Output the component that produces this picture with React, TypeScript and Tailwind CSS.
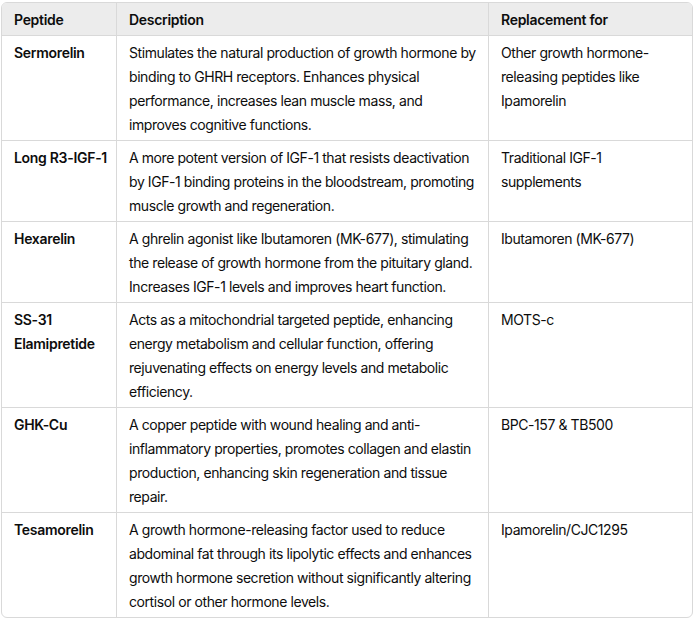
import React from "react";

const rows: { name: string[]; desc: string[]; rep: string[] }[] = [
  {
    name: ["Sermorelin"],
    desc: [
      "Stimulates the natural production of growth hormone by",
      "binding to GHRH receptors. Enhances physical",
      "performance, increases lean muscle mass, and",
      "improves cognitive functions.",
    ],
    rep: ["Other growth hormone-", "releasing peptides like", "Ipamorelin"],
  },
  {
    name: ["Long R3-IGF-1"],
    desc: [
      "A more potent version of IGF-1 that resists deactivation",
      "by IGF-1 binding proteins in the bloodstream, promoting",
      "muscle growth and regeneration.",
    ],
    rep: ["Traditional IGF-1", "supplements"],
  },
  {
    name: ["Hexarelin"],
    desc: [
      "A ghrelin agonist like Ibutamoren (MK-677), stimulating",
      "the release of growth hormone from the pituitary gland.",
      "Increases IGF-1 levels and improves heart function.",
    ],
    rep: ["Ibutamoren (MK-677)"],
  },
  {
    name: ["SS-31", "Elamipretide"],
    desc: [
      "Acts as a mitochondrial targeted peptide, enhancing",
      "energy metabolism and cellular function, offering",
      "rejuvenating effects on energy levels and metabolic",
      "efficiency.",
    ],
    rep: ["MOTS-c"],
  },
  {
    name: ["GHK-Cu"],
    desc: [
      "A copper peptide with wound healing and anti-",
      "inflammatory properties, promotes collagen and elastin",
      "production, enhancing skin regeneration and tissue",
      "repair.",
    ],
    rep: ["BPC-157 & TB500"],
  },
  {
    name: ["Tesamorelin"],
    desc: [
      "A growth hormone-releasing factor used to reduce",
      "abdominal fat through its lipolytic effects and enhances",
      "growth hormone secretion without significantly altering",
      "cortisol or other hormone levels.",
    ],
    rep: ["Ipamorelin/CJC1295"],
  },
];

function Lines({ lines }: { lines: string[] }) {
  return (
    <>
      {lines.map((l, i) => (
        <div key={i} className="whitespace-nowrap">
          {l}
        </div>
      ))}
    </>
  );
}

export default function App() {
  return (
    <div
      className="bg-white min-h-[619px] pt-[2px] pl-[1px]"
      style={{ fontFamily: "Inter, 'Noto Sans', sans-serif" }}
    >
      <div className="w-[692px] border border-[#d9d9d9] rounded-[6px] overflow-hidden text-[14px] leading-[24px] tracking-[-0.42px] text-[#0d0d0d]">
        <div className="grid grid-cols-[115px_372px_1fr] bg-[#ececec] font-semibold tracking-[-0.3px] border-b border-[#d9d9d9]">
          <div className="pl-3 pr-2 pt-[5px] pb-[3px] border-r border-[#d9d9d9]">Peptide</div>
          <div className="pl-3 pr-2 pt-[5px] pb-[3px] border-r border-[#d9d9d9]">Description</div>
          <div className="pl-3 pr-2 pt-[5px] pb-[3px]">Replacement for</div>
        </div>
        {rows.map((r, i) => (
          <div
            key={i}
            className={`grid grid-cols-[115px_372px_1fr] ${
              i < rows.length - 1 ? "border-b border-[#d9d9d9]" : ""
            }`}
          >
            <div className="pl-3 pr-2 pt-[5px] pb-[3px] border-r border-[#d9d9d9] font-semibold tracking-[-0.3px]">
              <Lines lines={r.name} />
            </div>
            <div className="pl-3 pr-2 pt-[5px] pb-[3px] border-r border-[#d9d9d9]">
              <Lines lines={r.desc} />
            </div>
            <div className="pl-3 pr-2 pt-[5px] pb-[3px]">
              <Lines lines={r.rep} />
            </div>
          </div>
        ))}
      </div>
    </div>
  );
}
